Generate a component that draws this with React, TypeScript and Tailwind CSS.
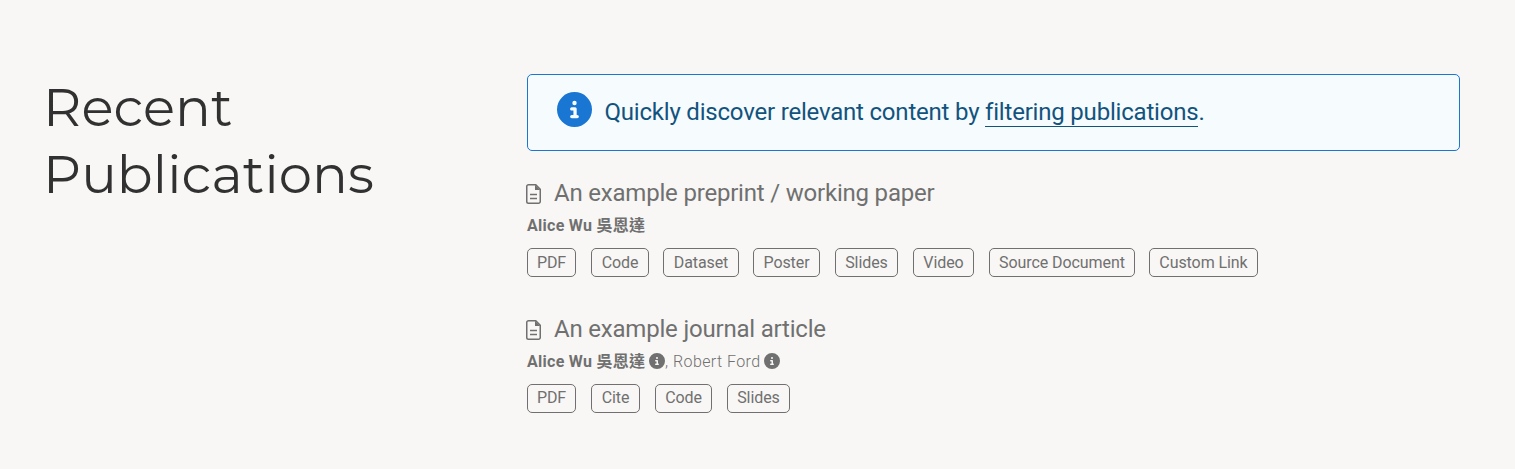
import React from "react";
import { FaCircleInfo } from "react-icons/fa6";

const Tag = ({ label, box, lift = "pb-0" }: { label: string; box: string; lift?: string }) => (
  <a className={`flex h-[29px] shrink-0 items-center justify-center whitespace-nowrap rounded-[5px] border border-[#707070] text-[16px] leading-none tracking-[-0.08px] ${box} ${lift}`}>
    {label}
  </a>
);

const FileIcon = () => (
  <svg viewBox="0 0 15 20" className="mt-0.5 h-[20px] w-[15px]" fill="none" stroke="currentColor">
    <path d="M2.5.75H9.8L14.25 5.2V17.5A1.75 1.75 0 0 1 12.5 19.25H2.5A1.75 1.75 0 0 1 .75 17.5V2.5A1.75 1.75 0 0 1 2.5.75Z" strokeWidth="1.5" />
    <path d="M9 .8V6H14.2Z" fill="currentColor" stroke="none" />
    <path d="M4 10.5H11M4 14.5H11" strokeWidth="1.4" />
  </svg>
);

const Title = ({ children }: { children: React.ReactNode }) => (
  <div className="-ml-px flex h-[36px] items-center">
    <FileIcon />
    <span className="ml-[13px] whitespace-nowrap text-[24px] leading-[36px] tracking-[-0.2px]">{children}</span>
  </div>
);

const LeadAuthor = () => (
  <b className="whitespace-pre">
    <span className="tracking-[0.28px]">Alice Wu </span>
    <span className="tracking-[0.2px]">吳恩達</span>
  </b>
);

export default function App() {
  return (
    <div className="flex h-[469px] w-full bg-[#f8f7f5] font-['Roboto','Noto_Sans_CJK_TC',sans-serif] text-[#707070]">
      <div className="w-[527px] shrink-0 pl-[43px] pt-[74px]">
        <h1 className="font-['Montserrat','Inter',sans-serif] text-[53px] font-[370] leading-[67px] tracking-[0.08px] text-[#313131]">
          <span className="block">Recent</span>
          <span className="block">Publications</span>
        </h1>
      </div>
      <div className="w-[933px] shrink-0 pt-[74px]">
        <div className="flex h-[77px] items-center rounded-[5px] border border-[#1976d2] bg-[#f6fbfe] pl-[29px] text-[24px] text-[#12537e]">
          <FaCircleInfo className="mb-[6px] h-[35px] w-[35px] text-[#1976d2]" />
          <p className="mb-0.5 ml-[12.5px] whitespace-nowrap tracking-[-0.2px]">
            Quickly discover relevant content by <a className="border-b border-[#12537e]">filtering publications</a>.
          </p>
        </div>
        <section className="pt-[24px]">
          <Title>An example preprint / working paper</Title>
          <div className="flex h-[30px] items-center text-[16px]">
            <LeadAuthor />
          </div>
          <div className="mt-[7px] flex">
            <Tag label="PDF" box="w-[49px]" />
            <Tag label="Code" box="ml-[15px] w-[58px]" />
            <Tag label="Dataset" box="ml-[14px] w-[76px]" />
            <Tag label="Poster" box="ml-[14px] w-[67px]" />
            <Tag label="Slides" box="ml-[15px] w-[63px]" />
            <Tag label="Video" box="ml-[15px] w-[61px]" />
            <Tag label="Source Document" box="ml-[15px] w-[146px]" />
            <Tag label="Custom Link" box="ml-[14px] w-[109px]" />
          </div>
        </section>
        <section className="pt-[34px]">
          <Title>An example journal article</Title>
          <div className="flex h-[30px] items-center text-[16px]">
            <LeadAuthor />
            <FaCircleInfo className="mb-0.5 ml-1" />
            <span className="font-[350] tracking-[0.42px]">, Robert Ford</span>
            <FaCircleInfo className="mb-0.5 ml-[3px]" />
          </div>
          <div className="mt-[7px] flex gap-[15px]">
            <Tag label="PDF" box="w-[49px]" lift="pb-0.5" />
            <Tag label="Cite" box="w-[49px]" lift="pb-0.5" />
            <Tag label="Code" box="w-[57px]" lift="pb-0.5" />
            <Tag label="Slides" box="w-[63px]" lift="pb-0.5" />
          </div>
        </section>
      </div>
    </div>
  );
}
